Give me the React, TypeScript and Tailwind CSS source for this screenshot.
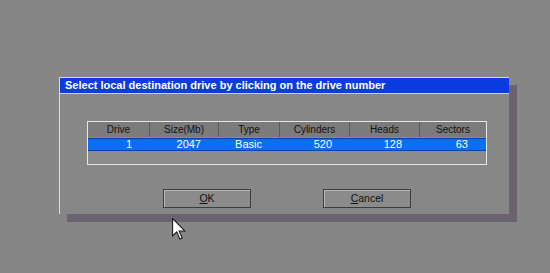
import React from "react"

const cols = [
  { name: "Drive", w: "w-[62px]", value: "1" },
  { name: "Size(Mb)", w: "w-[69px]", value: "2047" },
  { name: "Type", w: "w-[61px]", value: "Basic" },
  { name: "Cylinders", w: "w-[70px]", value: "520" },
  { name: "Heads", w: "w-[70px]", value: "128" },
  { name: "Sectors", w: "flex-1", value: "63" },
]

function DosButton({ label, hot }: { label: string; hot: number }) {
  return (
    <div className="w-[88px] h-[19px] border border-[#3c3c3c] bg-[#8b8b8b] shadow-[inset_1px_1px_0_#b8b8b8] flex items-center justify-center text-[10.5px] text-[#111]">
      <span>
        {label.slice(0, hot)}
        <span className="underline underline-offset-1">{label[hot]}</span>
        {label.slice(hot + 1)}
      </span>
    </div>
  )
}

function Cursor() {
  return (
    <svg width="14" height="22" viewBox="0 0 12 19" className="absolute left-[172px] top-[218px]">
      <path d="M0.5 0.5 L0.5 15.5 L4 12 L6.8 18.2 L8.8 17.3 L6.1 11.2 L11 11.2 Z" fill="#fff" stroke="#111" strokeWidth="0.9" strokeLinejoin="miter" />
    </svg>
  )
}

export default function App() {
  return (
    <div className="relative w-[550px] h-[273px] bg-[#868686] pt-[77px] pl-[59px] font-['Liberation_Sans',Arial,sans-serif] overflow-hidden">
      <div className="w-[450px] h-[137px] bg-[#878787] border-l border-t border-[#d8d8d8] border-r-[#363636] border-b-[#363636] shadow-[8px_8px_0_#6a6270] flex flex-col">
        <div className="h-[16px] bg-[#0b3ce0] border-b border-[#c8d0f0] flex items-center pl-[5px] text-white text-[11px] font-bold">
          Select local destination drive by clicking on the drive number
        </div>

        <div className="ml-[27px] mt-[27px] w-[400px] h-[44px] border border-[#e6e6e6] bg-[#8c8c8c] flex flex-col">
          <div className="h-[15px] bg-[#7b7b7b] flex">
            {cols.map((c, i) => (
              <div
                key={c.name}
                className={`${c.w} flex items-center justify-center text-[10px] text-[#111] ${i < cols.length - 1 ? "border-r border-[#5a5a5a]" : ""}`}
              >
                {c.name}
              </div>
            ))}
          </div>
          <div className="h-[13px] mt-[1px] bg-[#0c6df6] border-y border-[#0a3fb8] flex">
            {cols.map((c) => (
              <div key={c.name} className={`${c.w} flex items-center justify-end pr-[18px] text-[11px] text-white`}>
                {c.value}
              </div>
            ))}
          </div>
        </div>

        <div className="flex mt-[24px] ml-[103px] gap-[72px]">
          <DosButton label="OK" hot={0} />
          <DosButton label="Cancel" hot={0} />
        </div>
      </div>
      <Cursor />
    </div>
  )
}
